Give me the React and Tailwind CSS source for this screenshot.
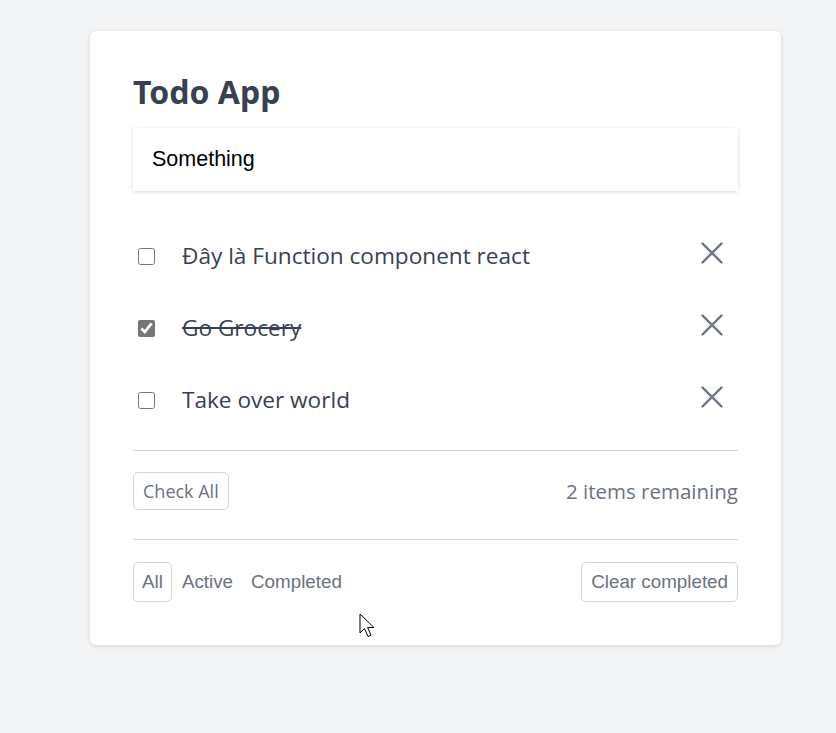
import React from "react";

const items = [
  { text: "Đây là Function component react", done: false },
  { text: "Go Grocery", done: true },
  { text: "Take over world", done: false },
];

function XIcon() {
  return (
    <svg width="22" height="22" viewBox="0 0 22 22" fill="none" stroke="#6b7280" strokeWidth="2.4" strokeLinecap="round">
      <path d="M1.5 1.5L20.5 20.5M20.5 1.5L1.5 20.5" />
    </svg>
  );
}

export default function App() {
  const seg = { fontFamily: '"Open Sans", "Noto Sans", sans-serif' };
  const arial = { fontFamily: '"Liberation Sans", Arial, sans-serif' };
  return (
    <div className="min-h-[733px] w-[836px] bg-[#f3f4f6] pt-[31px] pl-[90px] relative">
      <div className="w-[691px] bg-white rounded-md shadow-[0_1px_4px_rgba(0,0,0,0.15)] px-[43px] pt-[43px] pb-[43px]">
        <h1 className="text-[32px] leading-[36px] font-bold text-[#374151] mb-[18px]" style={{ fontFamily: '"Noto Sans", "Open Sans", sans-serif' }}>
          Todo App
        </h1>
        <input
          className="w-full h-[63px] px-[19px] text-[21.5px] text-black bg-white shadow-[0_1px_4px_rgba(0,0,0,0.15)] outline-none"
          style={arial}
          defaultValue="Something"
        />
        <div className="mt-[29px] mb-[14px]">
          {items.map((it, i) => (
            <div key={i} className="h-[72px] flex items-center">
              <input
                type="checkbox"
                defaultChecked={it.done}
                className="w-[17px] h-[17px] ml-[5px] accent-[#767676]"
              />
              <span
                className={"ml-[27px] text-[22.6px] text-[#374151] flex-1 " + (it.done ? "line-through" : "")}
                style={seg}
              >
                {it.text}
              </span>
              <div className="mr-[15px] -mt-[6px]">
                <XIcon />
              </div>
            </div>
          ))}
        </div>
        <div className="border-t border-[#d4d4d8] pt-[21px] pb-[29px] flex items-center justify-between">
          <button className="h-[38px] px-[9px] border border-[#d4d4d8] rounded-[5px] text-[18px] text-[#6b7280]" style={seg}>
            Check All
          </button>
          <span className="text-[20.5px] text-[#6b7280]" style={seg}>2 items remaining</span>
        </div>
        <div className="border-t border-[#d4d4d8] pt-[22px] flex items-center justify-between">
          <div className="flex items-center">
            <button className="h-[40px] px-[8px] border border-[#d4d4d8] rounded-[5px] text-[18.8px] text-[#6b7280]" style={arial}>
              All
            </button>
            <button className="ml-[10px] text-[18.8px] text-[#6b7280]" style={arial}>Active</button>
            <button className="ml-[18px] text-[18.8px] text-[#6b7280]" style={arial}>Completed</button>
          </div>
          <button className="h-[40px] px-[9px] border border-[#d4d4d8] rounded-[5px] text-[18.8px] text-[#6b7280]" style={arial}>
            Clear completed
          </button>
        </div>
      </div>
      <svg className="absolute left-[359px] top-[613px]" width="19" height="28" viewBox="0 0 19 28">
        <path d="M1 1 L1 20 L5.5 15.5 L9 23.5 L12 22.2 L8.6 14.5 L15 14.5 Z" fill="white" stroke="black" strokeWidth="1" strokeLinejoin="round" />
      </svg>
    </div>
  );
}
